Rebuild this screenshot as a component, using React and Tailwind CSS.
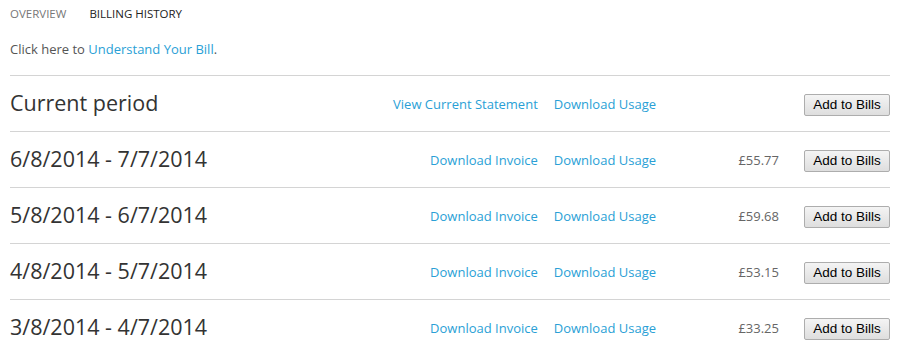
const periodos = [
  { rango: "6/8/2014 - 7/7/2014", importe: "£55.77" },
  { rango: "5/8/2014 - 6/7/2014", importe: "£59.68" },
  { rango: "4/8/2014 - 5/7/2014", importe: "£53.15" },
  { rango: "3/8/2014 - 4/7/2014", importe: "£33.25" },
];

function BotonAgregar() {
  return (
    <button
      type="button"
      className="w-[86px] h-[22px] border border-[#adadad] rounded-[2px] bg-gradient-to-b from-[#f4f4f4] to-[#dedede] text-[13.5px] text-black leading-none"
      style={{ fontFamily: '"Liberation Sans", Arial, sans-serif' }}
    >
      Add to Bills
    </button>
  );
}

function Fila({ titulo, primerLink, importe }) {
  return (
    <div className="flex items-center h-[56px] border-t border-[#d4d4d4]">
      <div className="flex-1 text-[21.5px] text-[#333]">{titulo}</div>
      <div className="flex items-center gap-[16px] text-[13px] text-[#2a9fd6] pt-[2px]">
        <a href="#">{primerLink}</a>
        <a href="#">Download Usage</a>
      </div>
      <div className="w-[123px] text-right text-[13px] text-[#666] pt-[2px]">
        {importe}
      </div>
      <div className="ml-[25px]">
        <BotonAgregar />
      </div>
    </div>
  );
}

export default function App() {
  return (
    <div
      className="w-[905px] h-[344px] overflow-hidden bg-white pl-[10px] pr-[15px]"
      style={{ fontFamily: '"Open Sans", "Noto Sans", sans-serif' }}
    >
      <div className="flex gap-[23px] pt-[5px] h-[30px] text-[11.5px] uppercase">
        <span className="text-[#777]">Overview</span>
        <span className="text-[#222]">Billing History</span>
      </div>

      <p className="h-[45px] pt-[10px] text-[13px] text-[#555]">
        Click here to{" "}
        <a href="#" className="text-[#2a9fd6]">
          Understand Your Bill
        </a>
        .
      </p>

      <Fila titulo="Current period" primerLink="View Current Statement" importe="" />
      {periodos.map((p) => (
        <Fila
          key={p.rango}
          titulo={p.rango}
          primerLink="Download Invoice"
          importe={p.importe}
        />
      ))}
    </div>
  );
}
